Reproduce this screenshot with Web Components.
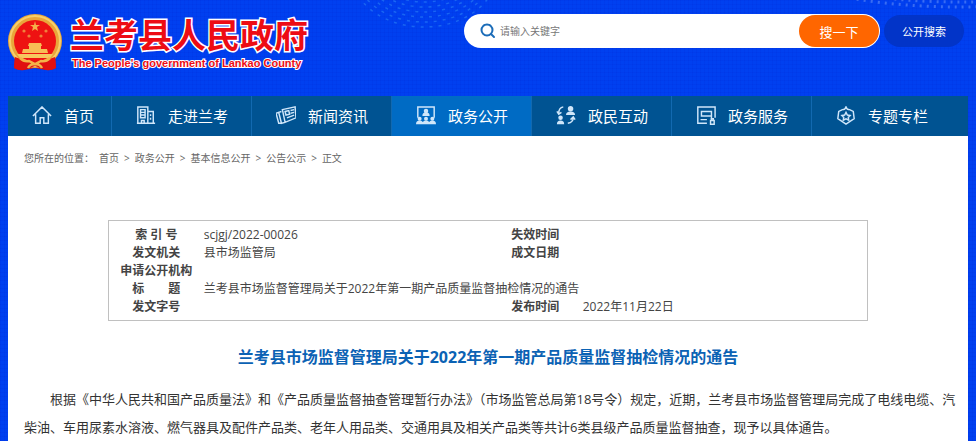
<!DOCTYPE html>
<html lang="zh-CN">
<head>
<meta charset="utf-8">
<meta name="viewport" content="width=device-width, initial-scale=1">
<title>兰考县人民政府</title>
<style>
  body {
    margin: 0;
    padding: 0 8px;
    color: #444;
    font-family: "Open Sans", "Noto Sans CJK SC", sans-serif;
    font-size: 12px;
    background-color: #0040f0;
    background-image:
      repeating-linear-gradient(90deg, rgba(0, 20, 190, .08) 0 1px, transparent 1px 4px),
      repeating-linear-gradient(0deg, rgba(0, 20, 190, .08) 0 1px, transparent 1px 4px);
  }
  main {
    background: #fff;
    padding: 0 8px 0 16px;
  }
</style>
</head>
<body>
  <site-header>
    <site-logo slot="logo" name="兰考县人民政府" english="The People's government of Lankao County"></site-logo>
    <search-box slot="search"></search-box>
  </site-header>

  <nav-bar>
    <nav-item icon="home">首页</nav-item>
    <nav-item icon="building">走进兰考</nav-item>
    <nav-item icon="news">新闻资讯</nav-item>
    <nav-item icon="open" active>政务公开</nav-item>
    <nav-item icon="people">政民互动</nav-item>
    <nav-item icon="service">政务服务</nav-item>
    <nav-item icon="badge">专题专栏</nav-item>
  </nav-bar>

  <main>
    <bread-crumb>
      <span slot="label">您所在的位置：</span>
    </bread-crumb>
    <doc-info></doc-info>
    <doc-article>
      <span slot="title">兰考县市场监督管理局关于2022年第一期产品质量监督抽检情况的通告</span>
      根据《中华人民共和国产品质量法》和《产品质量监督抽查管理暂行办法》（市场监管总局第18号令）规定，近期，兰考县市场监督管理局完成了电线电缆、汽柴油、车用尿素水溶液、燃气器具及配件产品类、老年人用品类、交通用具及相关产品类等共计6类县级产品质量监督抽查，现予以具体通告。
    </doc-article>
  </main>

<script>
class SiteHeader extends HTMLElement {

  constructor() {
    super();
    this.shadowDOM = this.attachShadow({mode: 'open'});
  }

  connectedCallback() {
    this.render();
  }

  // rows of dashes bent along an ellipse
  arcs(cx, cy, rx, ry, count, step) {
    let out = '';
    for (let i = 0; i < count; i++) {
      out += `<ellipse cx="${cx}" cy="${cy}" rx="${rx - i * step}" ry="${ry - i * step}" stroke-dashoffset="${i * 3}"/>`;
    }
    return out;
  }

  render() {
    this.shadowDOM.innerHTML = `
      <style>
          :host{
            display: block;
            position: relative;
          }
          .decor{
            position: absolute;
            top: 0;
            right: -8px;
            width: 640px;
            height: 32px;
            pointer-events: none;
          }
          header{
            display: flex;
            justify-content: space-between;
            align-items: flex-start;
            height: 96px;
            position: relative;
          }
      </style>

      <svg class="decor" viewBox="336 0 640 32" fill="none" stroke="#2f8cf8" stroke-opacity=".5" stroke-width="1.5" stroke-dasharray="3 6" aria-hidden="true">
        ${this.arcs(424, -26, 72, 53, 6, 5)}
        <g stroke="#6f9af8" stroke-opacity=".5" stroke-width="3" stroke-dasharray="2 5">
          ${this.arcs(960, -60, 220, 67, 2, 5)}
        </g>
      </svg>
      <header>
        <slot name="logo"></slot>
        <slot name="search"></slot>
      </header>
    `;
  }
}

customElements.define('site-header', SiteHeader);


class SiteLogo extends HTMLElement {

  constructor() {
    super();
    this.shadowDOM = this.attachShadow({mode: 'open'});
  }

  connectedCallback() {
    this.render();
  }

  render() {
    this.shadowDOM.innerHTML = `
      <style>
          :host{
            display: flex;
            gap: 8px;
            padding-top: 13px;
            white-space: nowrap;
          }
          svg{
            width: 54px;
            height: 60px;
            flex: none;
          }
          .text{
            display: flex;
            flex-direction: column;
            padding-top: 4px;
            color: #ed0c14;
            font-weight: bold;
            paint-order: stroke fill;
            -webkit-text-stroke: 3px #fff;
          }
          .name{
            font: bold 34px/40px "Liberation Serif", "Noto Sans CJK SC", serif;
          }
          .english{
            font: bold 11px/12px "Liberation Sans", sans-serif;
            padding-left: 2px;
            -webkit-text-stroke-width: 2px;
          }
      </style>

      <svg viewBox="0 0 54 60" aria-hidden="true">
        <path d="M7 42L6 55q5 3 10 2l11-2 11 2q5 1 10-2l-1-13z" fill="#e01010"/>
        <circle cx="27" cy="28" r="27" fill="#e9a63a"/>
        <circle cx="27" cy="28" r="25" fill="none" stroke="#f7cf6a" stroke-width="2"/>
        <circle cx="27" cy="28" r="21" fill="#ee1212"/>
        <path d="M27 8l1 4h4l-3 2 1 4-3-2-3 2 1-4-3-2h4z" fill="#f5b04a"/>
        <g fill="#f0823c"><circle cx="16" cy="18" r="1.6"/><circle cx="21" cy="23" r="1.6"/><circle cx="33" cy="23" r="1.6"/><circle cx="38" cy="18" r="1.6"/></g>
        <path d="M21 30h12l1 3h-1v3h6l1 4H14l1-4h6v-3h-1z" fill="#f8bd55"/>
        <path d="M9 41h36l-3 4H12z" fill="#f6c860"/>
        <path d="M7 44q9 4 20 4t20-4l1 11q-6 3-12 1l-9-3-9 3q-6 2-12-1z" fill="#e01010"/>
        <path d="M12 45q4 4 9 3l6 3 6-3q5 1 9-3M20 55q2-4 7-4t7 4" fill="none" stroke="#f4b348" stroke-width="2.5"/>
      </svg>
      <div class="text">
        <span class="name">${this.getAttribute('name')}</span>
        <span class="english">${this.getAttribute('english')}</span>
      </div>
    `;
  }
}

customElements.define('site-logo', SiteLogo);


class SearchBox extends HTMLElement {

  constructor() {
    super();
    this.shadowDOM = this.attachShadow({mode: 'open'});
  }

  connectedCallback() {
    this.render();
  }

  get value() {
    return this.shadowDOM.querySelector('#keyword').value;
  }

  render() {
    this.shadowDOM.innerHTML = `
      <style>
          :host{
            display: block;
            padding: 14px 4px 0 0;
          }
          form{
            display: flex;
            align-items: center;
            gap: 4px;
          }
          .field{
            display: flex;
            align-items: center;
            box-sizing: border-box;
            width: 416px;
            height: 34px;
            padding: 0 1px 0 16px;
            border-radius: 17px;
            background: #fff;
          }
          label{
            display: flex;
          }
          svg{
            width: 16px;
            height: 16px;
          }
          input{
            flex: 1;
            min-width: 0;
            margin: 0;
            padding: 0 4px;
            border: none;
            outline: none;
            background: none;
            font: inherit;
            font-size: 10px;
          }
          input::placeholder{
            color: #777;
          }
          button{
            height: 32px;
            padding: 0;
            border: none;
            border-radius: 16px;
            color: #fff;
            font: inherit;
            cursor: pointer;
          }
          .go{
            width: 80px;
            background: #ff6600;
            font-size: 13px;
          }
          .open{
            width: 80px;
            background: #0234c8;
            font-size: 11px;
          }
      </style>

      <form>
        <div class="field">
          <label for="keyword" aria-label="关键字">
            <svg viewBox="0 0 16 16" fill="none" stroke="#1b6cb8" stroke-width="2" stroke-linecap="round">
              <circle cx="7" cy="7" r="5.5"/>
              <path d="M11 11l3 3"/>
            </svg>
          </label>
          <input id="keyword" type="text" placeholder="请输入关键字">
          <button class="go" type="button">搜一下</button>
        </div>
        <button class="open" type="button">公开搜索</button>
      </form>
    `;
  }
}

customElements.define('search-box', SearchBox);


class NavBar extends HTMLElement {

  constructor() {
    super();
    this.shadowDOM = this.attachShadow({mode: 'open'});
  }

  connectedCallback() {
    this.render();
  }

  render() {
    this.shadowDOM.innerHTML = `
      <style>
          :host{
            display: block;
            background: #005392;
          }
          nav{
            display: flex;
            height: 40px;
          }
          ::slotted(nav-item:first-child){
            --item-end: 17px;
          }
          ::slotted(nav-item:last-child){
            --item-line: transparent;
          }
      </style>

      <nav><slot></slot></nav>
    `;
  }
}

customElements.define('nav-bar', NavBar);


const ICONS = {
  home: `<path d="M2 13L12 3l10 10M5 11v10h5v-6h4v6h5V11"/>`,
  building: `<path d="M3 21V3h11v18M14 8h6v13M2 21h20"/><path d="M6 6v9h5V6zM6 9h5M6 12h5M7 21v-3h3v3M17 11v2M17 15v2" stroke-width="1.6"/>`,
  news: `<path d="M8 6l14-3 1 12-12 5-3-14zM7 8L4 9l3 12 4-1M4 9l-3 1 3 11h3"/><path d="M11 8l4-1 1 4-4 1zM17 7l4-1M17 10l4-1M13 15l8-3"/>`,
  open: `<path d="M3 15V3h18v12"/><g fill="currentColor" stroke="none"><circle cx="12" cy="7.5" r="2.5"/><path d="M8 13q0-4 4-4t4 4z"/><circle cx="5" cy="16" r="2.2"/><circle cx="12" cy="16" r="2.2"/><circle cx="19" cy="16" r="2.2"/><path d="M1 22q0-4 4-4t4 4zM8 22q0-4 4-4t4 4zM15 22q0-4 4-4t4 4z"/></g>`,
  people: `<g fill="currentColor" stroke="none"><circle cx="17" cy="5" r="3"/><path d="M12 12q0-4 5-4t5 4z"/><circle cx="6" cy="15" r="2.5"/><path d="M2 22q0-4 4-4t4 4z"/></g><path d="M9 3Q4 4 4 10M2 8l2 3 3-2M14 21q6-1 6-6M17 17l3-3 2 3"/>`,
  service: `<path d="M13 21H3V3h19v12"/><path d="M7 8h11v5H7zM6 17h7M18 13v3"/><path d="M17 18h4v4h-4zM18 18v-2h2v2"/>`,
  badge: `<path d="M12 3q1 3 4 3l4 2 1 8-9 6-9-6 1-8 4-2q3 0 4-3z"/><path d="M12 9l1.5 3 3 .5-2 2 .5 3-3-1.500-3 1.500.5-3-2-2 3-.5z"/>`
};

class NavItem extends HTMLElement {

  constructor() {
    super();
    this.shadowDOM = this.attachShadow({mode: 'open'});
  }

  connectedCallback() {
    this.render();
  }

  render() {
    this.shadowDOM.innerHTML = `
      <style>
          :host{
            display: flex;
            border-right: 1px solid var(--item-line, #1269b0);
          }
          :host([active]){
            background: #006bc4;
          }
          a{
            display: flex;
            align-items: center;
            gap: 8px;
            padding: 0 var(--item-end, 23px) 0 24px;
            color: #fff;
            font-size: 15px;
            line-height: 24px;
            text-decoration: none;
            white-space: nowrap;
          }
          svg{
            width: 20px;
            height: 20px;
            padding: 0 4px 0 0;
            color: #cfe6fa;
          }
      </style>

      <a href="#">
        <svg viewBox="1 2 22 22" fill="none" stroke="currentColor" stroke-width="1.6" aria-hidden="true">${ICONS[this.getAttribute('icon')]}</svg>
        <slot></slot>
      </a>
    `;
  }
}

customElements.define('nav-item', NavItem);


class BreadCrumb extends HTMLElement {

  constructor() {
    super();
    this.shadowDOM = this.attachShadow({mode: 'open'});
    this.links = ['首页', '政务公开', '基本信息公开', '公告公示'];
  }

  connectedCallback() {
    this.render();
  }

  render() {
    this.shadowDOM.innerHTML = `
      <style>
          :host{
            display: block;
            padding: 14px 0;
            color: #666;
            font-size: 10px;
            line-height: 16px;
          }
          nav{
            display: flex;
            gap: 5px;
          }
          a{
            color: inherit;
            text-decoration: none;
          }
      </style>

      <nav>
        <slot name="label"></slot>
        ${this.links.map(text => `<a href="#">${text}</a><span>&gt;</span>`).join('')}
        <span>正文</span>
      </nav>
    `;
  }
}

customElements.define('bread-crumb', BreadCrumb);


class DocInfo extends HTMLElement {

  constructor() {
    super();
    this.shadowDOM = this.attachShadow({mode: 'open'});
  }

  connectedCallback() {
    this.render();
  }

  render() {
    this.shadowDOM.innerHTML = `
      <style>
          :host{
            display: block;
            margin: 40px 92px 0 84px;
            padding: 5px 0 4px;
            border: 1px solid #c0c0c0;
          }
          table{
            width: 100%;
            border-collapse: collapse;
            table-layout: fixed;
            font-size: 12px;
            line-height: 18px;
          }
          th, td{
            height: 18px;
            padding: 0;
            text-align: left;
            white-space: nowrap;
          }
          th{
            width: 12.5%;
            text-align: center;
          }
      </style>

      <table>
        <tr><th>索 引 号</th><td>scjgj/2022-00026</td><th>失效时间</th><td></td></tr>
        <tr><th>发文机关</th><td>县市场监管局</td><th>成文日期</th><td></td></tr>
        <tr><th>申请公开机构</th><td colspan="3"></td></tr>
        <tr><th>标　　题</th><td colspan="3">兰考县市场监督管理局关于2022年第一期产品质量监督抽检情况的通告</td></tr>
        <tr><th>发文字号</th><td></td><th>发布时间</th><td>2022年11月22日</td></tr>
      </table>
    `;
  }
}

customElements.define('doc-info', DocInfo);


class DocArticle extends HTMLElement {

  constructor() {
    super();
    this.shadowDOM = this.attachShadow({mode: 'open'});
  }

  connectedCallback() {
    this.render();
  }

  render() {
    this.shadowDOM.innerHTML = `
      <style>
          :host{
            display: block;
            padding-top: 22px;
            line-height: 28px;
          }
          h1{
            margin: 0 8px 14px 0;
            color: #0b62b4;
            font-size: 16px;
            text-align: center;
          }
          p{
            margin: 0;
            color: #333;
            font-size: 13px;
            text-indent: 2em;
          }
      </style>

      <h1><slot name="title"></slot></h1>
      <p><slot></slot></p>
    `;
  }
}

customElements.define('doc-article', DocArticle);
</script>
</body>
</html>
